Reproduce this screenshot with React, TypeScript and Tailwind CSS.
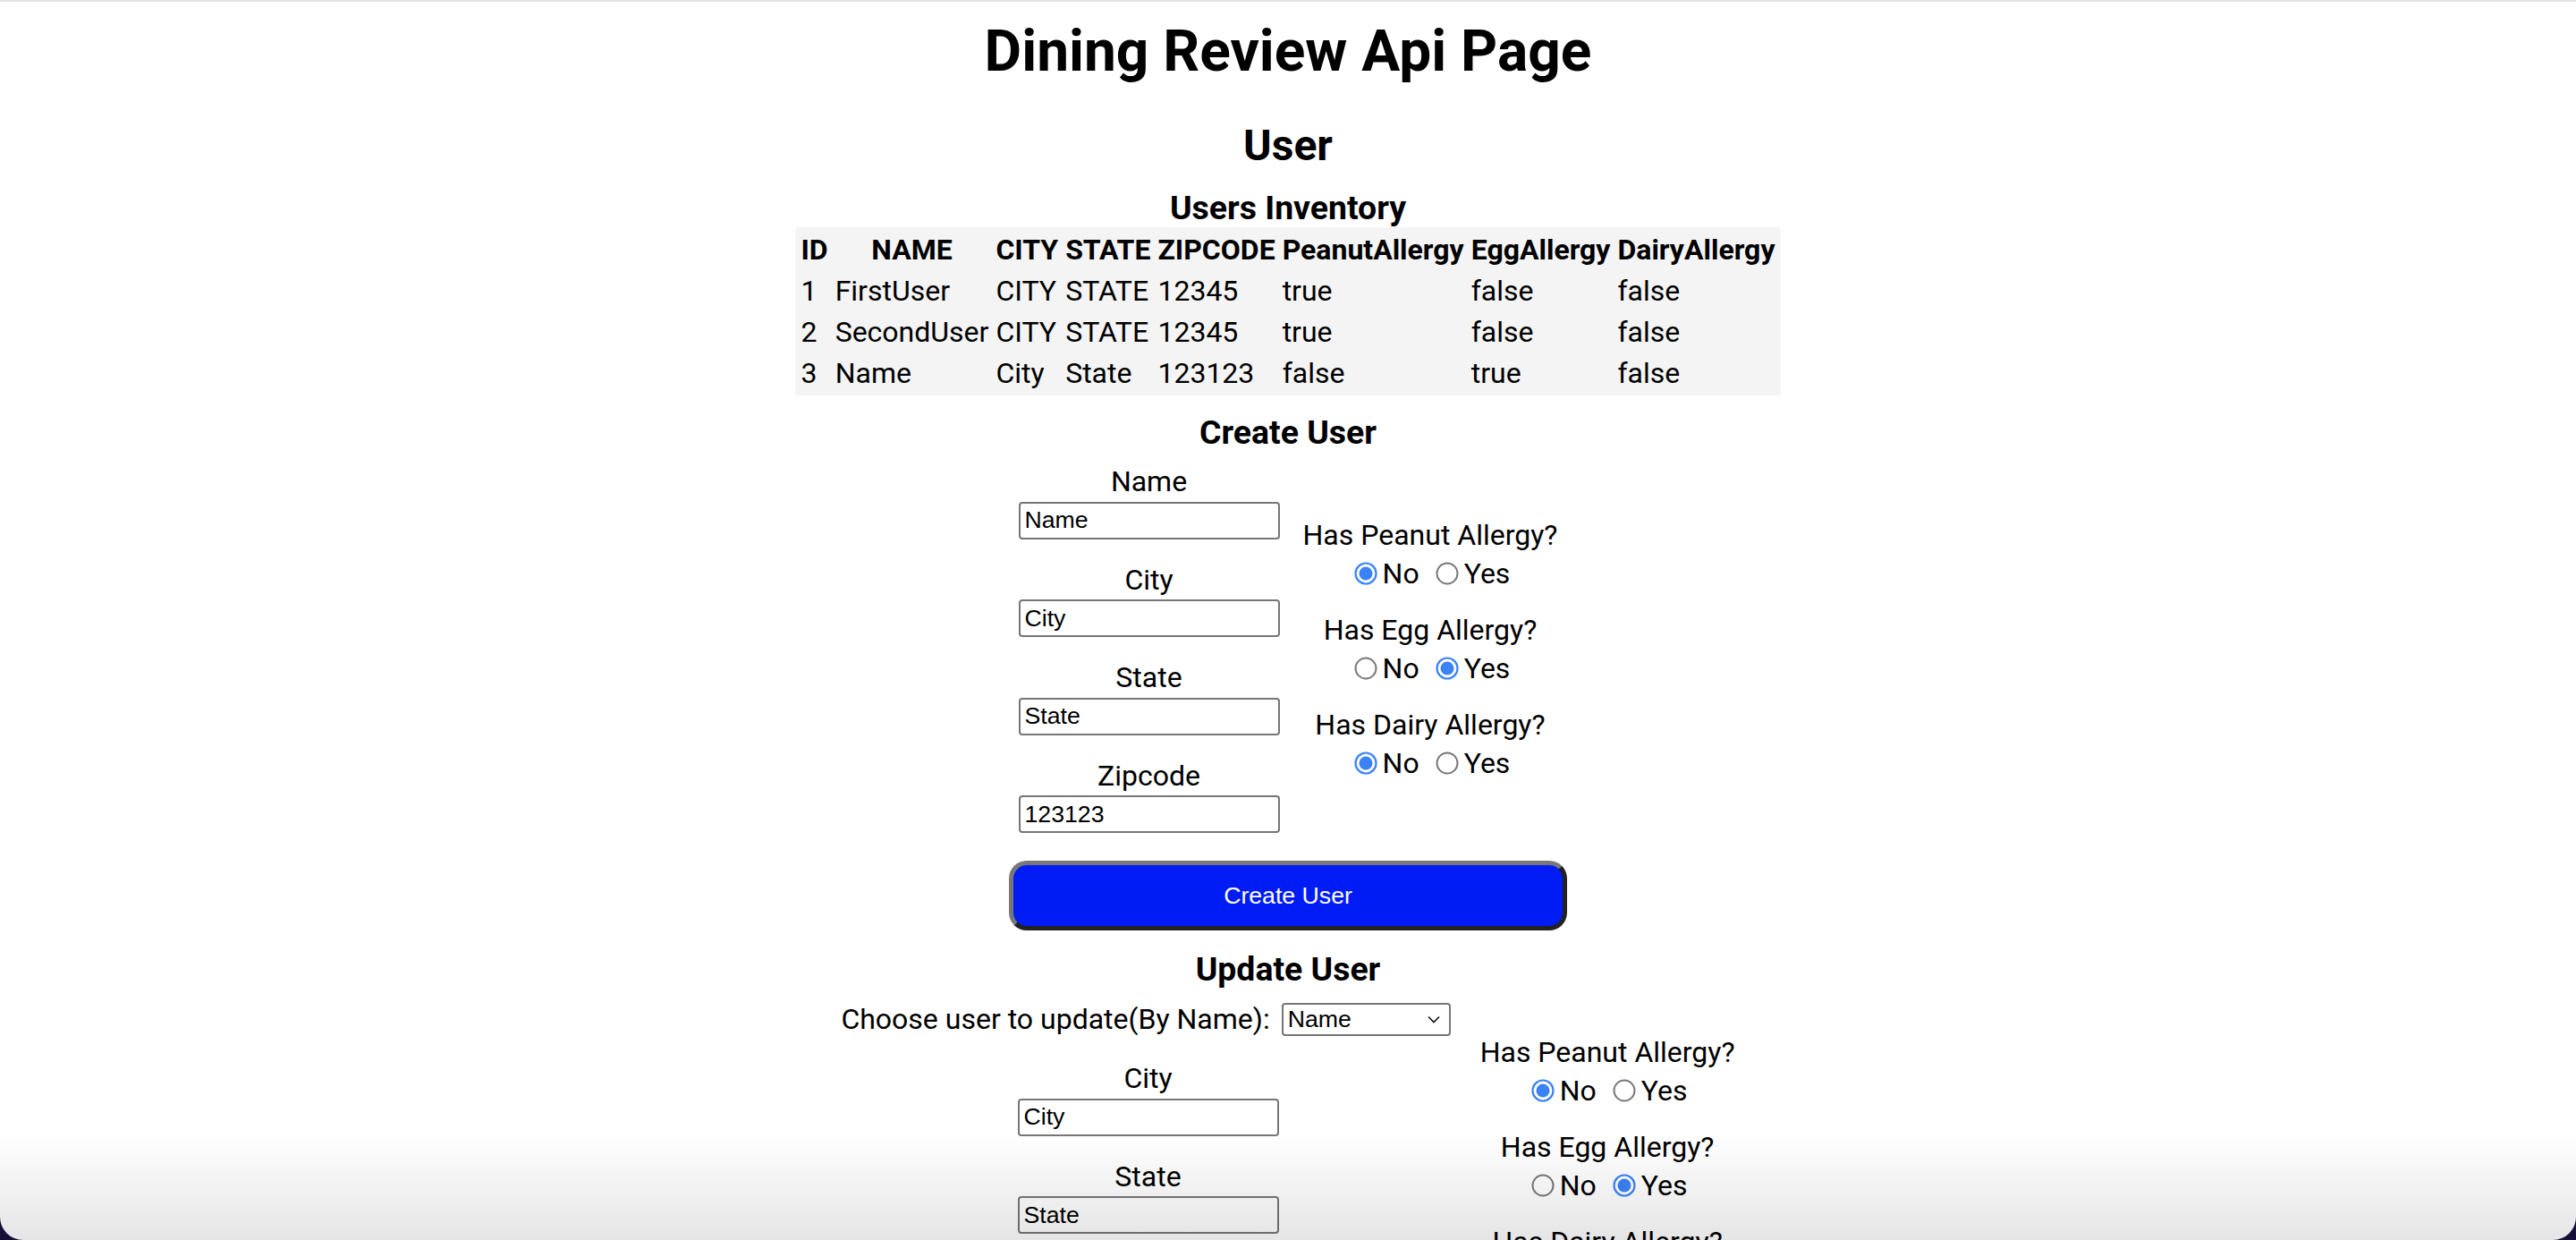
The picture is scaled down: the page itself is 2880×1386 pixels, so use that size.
import { ReactNode } from "react";

type User = {
  id: number;
  name: string;
  city: string;
  state: string;
  zipcode: string;
  peanut: boolean;
  egg: boolean;
  dairy: boolean;
};

const users: User[] = [
  { id: 1, name: "FirstUser", city: "CITY", state: "STATE", zipcode: "12345", peanut: true, egg: false, dairy: false },
  { id: 2, name: "SecondUser", city: "CITY", state: "STATE", zipcode: "12345", peanut: true, egg: false, dairy: false },
  { id: 3, name: "Name", city: "City", state: "State", zipcode: "123123", peanut: false, egg: true, dairy: false },
];

const ctrlFont = "[font-family:'Liberation_Sans',Arial,sans-serif] text-[26.67px]";

function RadioDot({ checked }: { checked: boolean }) {
  return (
    <svg width="26" height="26" viewBox="0 0 26 26" className="ml-[10px] mr-[6px] shrink-0">
      {checked ? (
        <>
          <circle cx="13" cy="13" r="11.5" fill="white" stroke="#3b82f6" strokeWidth="2.2" />
          <circle cx="13" cy="13" r="7.5" fill="#3b82f6" />
        </>
      ) : (
        <circle cx="13" cy="13" r="11.5" fill="white" stroke="#7a7a7a" strokeWidth="2" />
      )}
    </svg>
  );
}

function YesNo({ label, yes }: { label: string; yes: boolean }) {
  return (
    <div className="flex flex-col items-center">
      <div className="h-[37.5px]">{label}</div>
      <div className="mt-[6px] flex h-[37.5px] items-center gap-[8px] pr-[6px]">
        <span className="flex items-center">
          <RadioDot checked={!yes} />
          No
        </span>
        <span className="flex items-center">
          <RadioDot checked={yes} />
          Yes
        </span>
      </div>
    </div>
  );
}

function Field({ label, value, className }: { label: string; value: string; className?: string }) {
  return (
    <div className={`flex flex-col items-center ${className ?? ""}`}>
      <div className="h-[37.5px]">{label}</div>
      <input
        readOnly
        value={value}
        className={`mt-[4px] h-[42px] w-[292px] rounded-[4px] border-2 border-[#767676] bg-white px-[5px] text-black outline-none ${ctrlFont}`}
      />
    </div>
  );
}

function SubHead({ children, className }: { children: ReactNode; className?: string }) {
  return <h3 className={`text-[37.4px] font-bold ${className ?? ""}`}>{children}</h3>;
}

function AllergyColumn() {
  return (
    <div className="flex flex-col gap-[25px]">
      <YesNo label="Has Peanut Allergy?" yes={false} />
      <YesNo label="Has Egg Allergy?" yes={true} />
      <YesNo label="Has Dairy Allergy?" yes={false} />
    </div>
  );
}

export default function App() {
  return (
    <div className="relative h-[1386px] overflow-hidden bg-[#16113a]">
      <div className="relative h-full overflow-hidden rounded-b-[26px] border-t-2 border-[#e1e1e1] bg-white text-center text-[32px] leading-[normal] text-black [font-family:Roboto,sans-serif]">
        <h1 className="mt-[18px] text-[64px] font-bold">Dining Review Api Page</h1>
        <h2 className="mt-[39px] text-[48px] font-bold">User</h2>
        <SubHead className="mt-[19px]">Users Inventory</SubHead>

        <table className="mx-auto border-separate border-spacing-[4px] bg-[#f4f4f4]">
          <thead>
            <tr>
              {["ID", "NAME", "CITY", "STATE", "ZIPCODE", "PeanutAllergy", "EggAllergy", "DairyAllergy"].map((h) => (
                <th key={h} className="p-[2px] text-center font-bold">
                  {h}
                </th>
              ))}
            </tr>
          </thead>
          <tbody>
            {users.map((u) => (
              <tr key={u.id}>
                <td className="p-[2px] text-left">{u.id}</td>
                <td className="p-[2px] text-left">{u.name}</td>
                <td className="p-[2px] text-left">{u.city}</td>
                <td className="p-[2px] text-left">{u.state}</td>
                <td className="p-[2px] text-left">{u.zipcode}</td>
                <td className="p-[2px] text-left">{String(u.peanut)}</td>
                <td className="p-[2px] text-left">{String(u.egg)}</td>
                <td className="p-[2px] text-left">{String(u.dairy)}</td>
              </tr>
            ))}
          </tbody>
        </table>

        <SubHead className="mt-[19px]">Create User</SubHead>
        <div className="mt-[14px] flex items-center justify-center gap-[26px]">
          <div className="flex flex-col gap-[26px]">
            <Field label="Name" value="Name" />
            <Field label="City" value="City" />
            <Field label="State" value="State" />
            <Field label="Zipcode" value="123123" />
          </div>
          <AllergyColumn />
        </div>

        <button
          className={`mx-auto mt-[31px] block h-[78px] w-[624px] rounded-[20px] border-[5px] border-t-[#787878] border-l-[#787878] border-r-[#222] border-b-[#222] bg-[#001cf5] text-white ${ctrlFont}`}
        >
          Create User
        </button>

        <SubHead className="mt-[21px]">Update User</SubHead>
        <div className="mt-[13px] flex items-center justify-center gap-[33px]">
          <div className="flex flex-col items-center gap-[26px]">
            <div className="flex h-[42px] items-center gap-[13px]">
              <span>Choose user to update(By Name):</span>
              <div
                className={`flex h-[37px] w-[189px] items-center justify-between rounded-[4px] border-2 border-[#767676] bg-white pl-[5px] pr-[10px] ${ctrlFont}`}
              >
                <span>Name</span>
                <svg width="14" height="9" viewBox="0 0 14 9" fill="none" stroke="#111" strokeWidth="1.6">
                  <path d="M1 1.5 L7 7.5 L13 1.5" />
                </svg>
              </div>
            </div>
            <Field label="City" value="City" className="ml-[5px]" />
            <Field label="State" value="State" className="ml-[5px]" />
            <Field label="Zipcode" value="123123" className="ml-[5px]" />
          </div>
          <AllergyColumn />
        </div>

        <div className="pointer-events-none absolute inset-x-0 bottom-0 h-[120px] bg-linear-to-b from-transparent to-[rgba(0,0,0,0.1)]" />
      </div>
    </div>
  );
}
